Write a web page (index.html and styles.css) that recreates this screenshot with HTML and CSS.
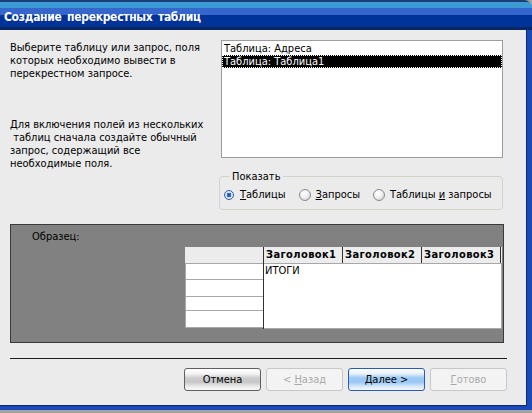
FILE: index.html
```html
<!DOCTYPE html>
<html lang="ru">
<head>
<meta charset="utf-8">
<title>Создание перекрестных таблиц</title>
<link rel="stylesheet" href="styles.css">
</head>
<body>
<div class="window">
  <div class="titlebar"><span class="title">Создание перекрестных таблиц</span></div>
  <div class="frame">
    <div class="top">
      <div class="intro">
        <p class="para">Выберите таблицу или запрос, поля<br>которых необходимо вывести в<br>перекрестном запросе.</p>
        <p class="para para2">Для включения полей из нескольких<br>&nbsp;таблиц сначала создайте обычный<br>запрос, содержащий все<br>необходимые поля.</p>
      </div>
      <div class="side">
        <div class="listbox">
          <div class="item">Таблица: Адреса</div>
          <div class="item selected">Таблица: Таблица1</div>
        </div>
        <fieldset class="group">
          <legend class="legend">Показать</legend>
          <div class="radios">
            <label class="radio"><span class="dot checked"></span><span><u>Т</u>аблицы</span></label>
            <label class="radio"><span class="dot"></span><span><u>З</u>апросы</span></label>
            <label class="radio"><span class="dot"></span><span>Таблицы <u>и</u> запросы</span></label>
          </div>
        </fieldset>
      </div>
    </div>
    <div class="sample">
      <div class="sample-label">Образец:</div>
      <div class="grid">
        <div class="rowheads">
          <div class="rh-head"></div>
          <div class="rh-row r1"></div>
          <div class="rh-row r2"></div>
          <div class="rh-row r3"></div>
          <div class="rh-row r4"></div>
        </div>
        <div class="data">
          <div class="dg-head">
            <div class="hcell">Заголовок1</div>
            <div class="hcell">Заголовок2</div>
            <div class="hcell">Заголовок3</div>
          </div>
          <div class="dg-body">ИТОГИ</div>
        </div>
      </div>
    </div>
    <div class="separator"></div>
    <div class="buttons">
      <button class="btn btn-cancel" type="button">Отмена</button>
      <button class="btn btn-disabled" type="button" disabled>&lt; <u>Н</u>азад</button>
      <button class="btn btn-default" type="button"><u>Д</u>алее &gt;</button>
      <button class="btn btn-disabled" type="button" disabled><u>Г</u>отово</button>
    </div>
  </div>
</div>
</body>
</html>
```
FILE: styles.css
```css
html, body {
  margin: 0;
  padding: 0;
}
body {
  width: 532px;
  height: 413px;
  background: #a2a2a2;
  font-family: "DejaVu Sans Condensed", "DejaVu Sans", sans-serif;
  font-stretch: condensed;
  font-size: 11px;
  color: #000;
  overflow: hidden;
}
.window {
  width: 532px;
  height: 410px;
  display: flex;
  flex-direction: column;
}
.titlebar {
  height: 30px;
  flex: none;
  box-sizing: border-box;
  border-top-right-radius: 8px;
  background: linear-gradient(to bottom,
    #1d3f78 0px, #1d3f78 2px,
    #3c9bd4 2px, #3c9bd4 8px,
    #3566cc 8px, #3566cc 15px,
    #003399 15px, #003399 27px,
    #06275f 27px, #06275f 30px);
  display: flex;
  align-items: center;
  padding: 3px 0 0 4px;
}
.title {
  color: #fff;
  font-weight: bold;
  font-size: 12px;
  letter-spacing: -0.3px;
  word-spacing: 2px;
}
.frame {
  flex: 1;
  background: #ebebeb;
  border-right: 5px solid #1a4ab8;
  border-bottom: 4px solid #1a4ab8;
  box-shadow: inset -1px -1px 0 #0b2a6a;
  display: flex;
  flex-direction: column;
}
.top {
  display: grid;
  grid-template-columns: 200px 282px;
  column-gap: 11px;
  padding: 10px 0 0 10px;
}
.intro {
  padding-top: 1px;
}
.para {
  margin: 0;
  line-height: 13px;
}
.para2 {
  margin-top: 38px;
}
.listbox {
  height: 118px;
  box-sizing: border-box;
  background: #fff;
  border: 1px solid #9d9d9d;
  padding: 1px 0 0 0;
}
.item {
  height: 13px;
  line-height: 13px;
  padding-left: 2px;
  white-space: nowrap;
}
.item.selected {
  background: #000;
  color: #fff;
  outline: 1px dotted #fff;
  outline-offset: -1px;
}
.group {
  margin: 12px 0 0 -2px;
  padding: 0 0 0 3px;
  height: 40px;
  box-sizing: border-box;
  border: 1px solid #d3d3c8;
  border-radius: 4px;
  min-width: 0;
}
.legend {
  margin-left: 6px;
  padding: 0 3px;
  line-height: 13px;
}
.radios {
  display: flex;
  align-items: center;
  padding-top: 5px;
  white-space: nowrap;
}
.radio {
  display: flex;
  flex: none;
  align-items: center;
  gap: 5px;
  margin-right: 13px;
}
.radio:last-child {
  margin-right: 0;
}
.dot {
  width: 12px;
  height: 12px;
  flex: none;
  box-sizing: border-box;
  border-radius: 50%;
  border: 1px solid #8a8a8a;
  background: radial-gradient(circle at 40% 35%, #ffffff 0%, #f2f2f2 40%, #c8c8c8 100%);
}
.dot.checked {
  width: 10px;
  height: 10px;
  margin: 0 1px;
  border: 1px solid #2e5fa8;
  background: radial-gradient(circle, #1e4fa3 0%, #3a70c8 38%, #cfe0f5 45%, #e8f0fb 100%);
}
.sample {
  margin: 14px 0 0 10px;
  width: 494px;
  height: 119px;
  box-sizing: border-box;
  background: #818181;
  border: 1px solid #3a3a3a;
  padding: 5px 0 0 21px;
}
.sample-label {
  line-height: 13px;
}
.grid {
  display: flex;
  margin: 4px 0 0 153px;
}
.rowheads {
  width: 78px;
  display: flex;
  flex-direction: column;
}
.rh-head {
  height: 16px;
  background: #ececec;
  border-bottom: 1px solid #a8a8a8;
}
.rh-row {
  background: #fff;
  border-bottom: 1px solid #a8a8a8;
  border-left: 1px solid #a8a8a8;
}
.r1 { height: 15px; }
.r2 { height: 16px; }
.r3 { height: 13px; }
.r4 { height: 16px; }
.data {
  width: 238px;
  display: flex;
  flex-direction: column;
  border-left: 1px solid #303030;
}
.dg-head {
  display: flex;
  height: 17px;
  box-sizing: border-box;
  background: #ececec;
  border-bottom: 1px solid #a8a8a8;
}
.hcell {
  width: 79px;
  box-sizing: border-box;
  border-right: 1px solid #303030;
  font-weight: bold;
  font-size: 11px;
  letter-spacing: 0.4px;
  line-height: 16px;
  padding-left: 2px;
  white-space: nowrap;
  overflow: hidden;
}
.dg-body {
  height: 65px;
  box-sizing: border-box;
  background: #fff;
  border-right: 1px solid #a8a8a8;
  border-bottom: 1px solid #a8a8a8;
  line-height: 13px;
  padding-left: 1px;
}
.separator {
  margin: 15px 0 0 10px;
  width: 497px;
  height: 1px;
  background: #1e1e1e;
}
.buttons {
  display: flex;
  justify-content: flex-end;
  gap: 5px;
  padding: 9px 20px 0 0;
}
.btn {
  font: inherit;
  width: 77px;
  height: 23px;
  box-sizing: border-box;
  border-radius: 3px;
  padding: 0;
  color: #000;
}
.btn-cancel {
  border: 1px solid #5f5f5f;
  background: linear-gradient(to bottom, #ffffff 0%, #f4f4f4 22%, #cdcdcd 42%, #c6c6c6 62%, #ececec 85%, #f8f8f8 100%);
}
.btn-default {
  border: 1px solid #2a5cb4;
  background: linear-gradient(to bottom, #ffffff 0%, #e8f2fc 22%, #9ccaf4 42%, #9ac8f3 62%, #dceafb 85%, #f2f7fd 100%);
}
.btn-disabled {
  border: 1px solid #c7c7c7;
  background: #f3f3f3;
  color: #a9a9a9;
}
```
